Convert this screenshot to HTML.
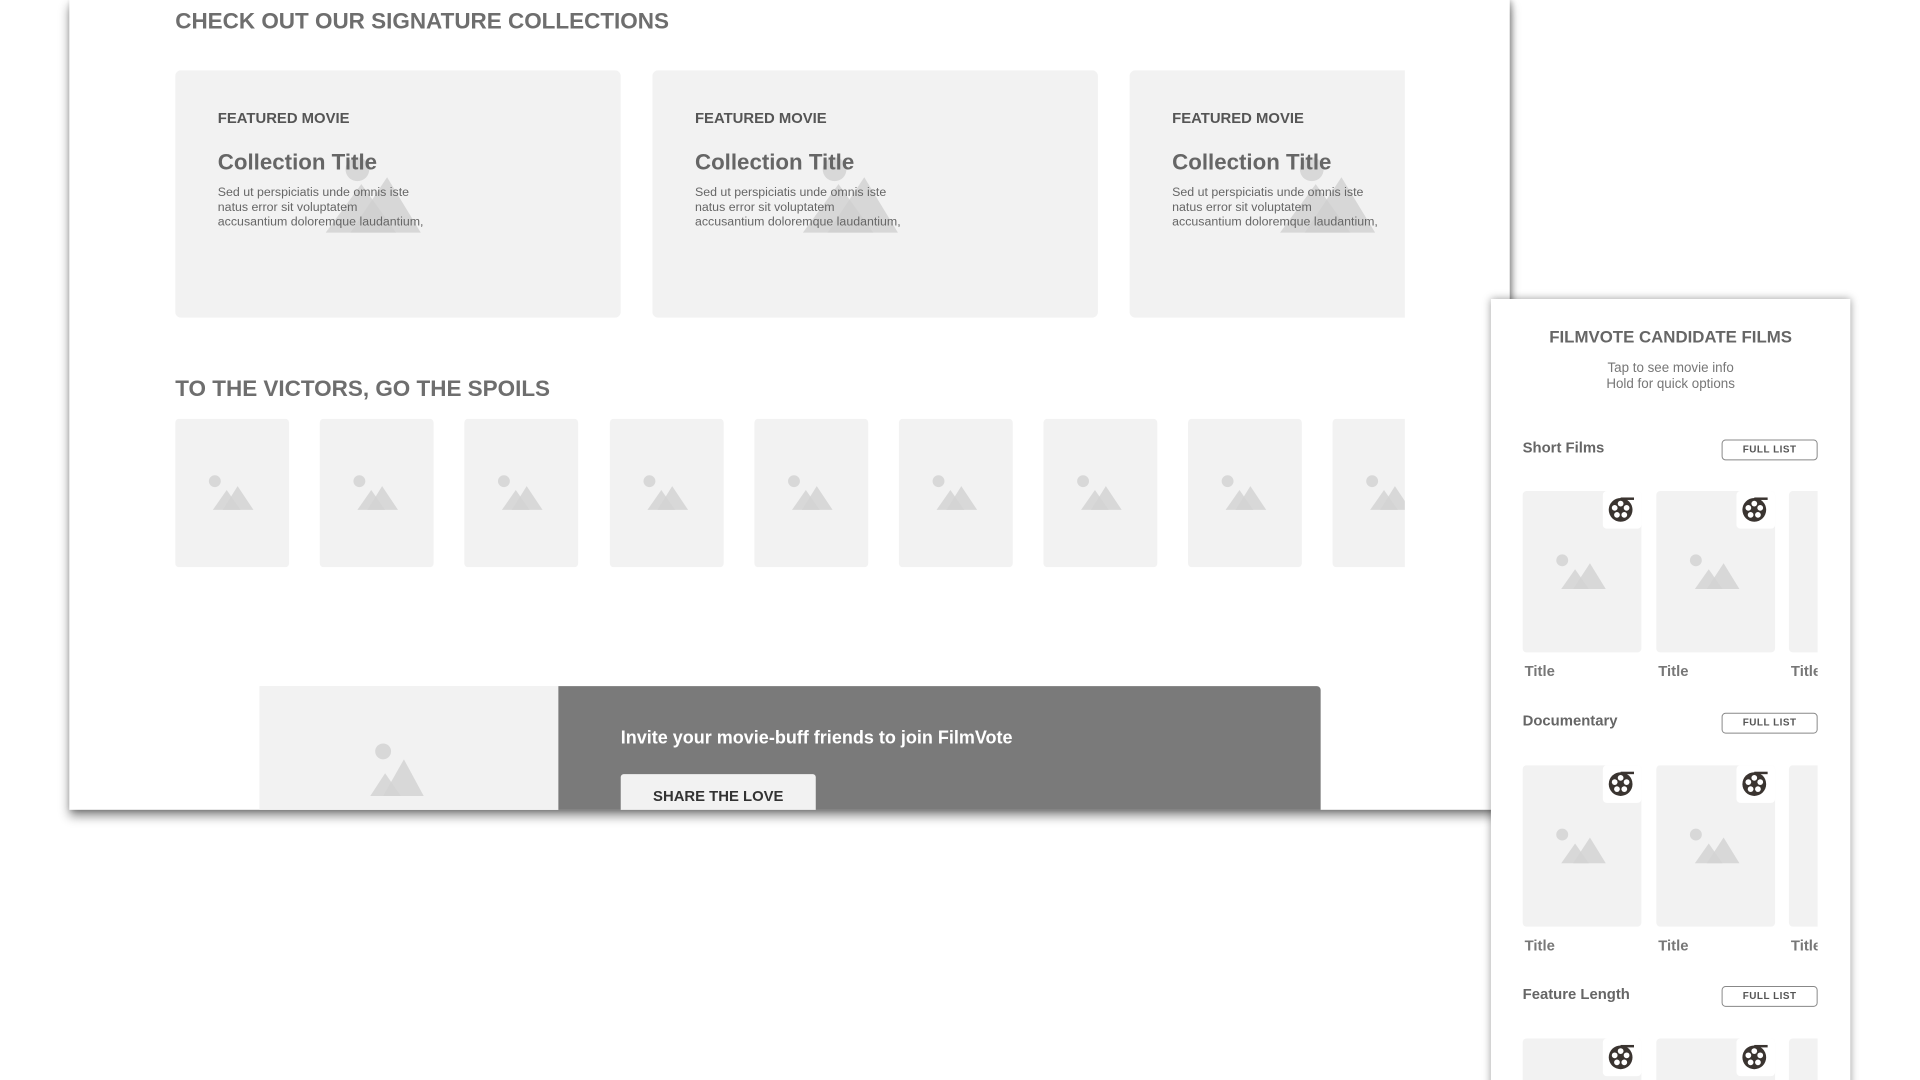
<!DOCTYPE html>
<html style="overflow:hidden;height:1080px"><head><meta charset="utf-8"><style>
*{margin:0;padding:0;box-sizing:border-box}
body{width:1920px;height:1080px;background:#fff;position:relative;overflow:hidden;font-family:"Liberation Sans",Arial,sans-serif}
#wrap{position:absolute;left:0;top:0;width:1940px;height:1091px;transform:scale(0.99);transform-origin:0 0}
.abs{position:absolute}
#main{left:70px;top:0;width:1455px;height:818px;background:#fff;box-shadow:0 6px 10px rgba(0,0,0,.45),2px 0 6px rgba(0,0,0,.3);overflow:hidden}
.h{color:#6e6e6e;font-weight:bold;font-size:22.7px;white-space:nowrap}
.card{background:#f2f2f2;border-radius:6px;overflow:hidden}
.fm{font-size:15px;font-weight:bold;color:#555}
.ct{font-size:22.5px;font-weight:bold;color:#666}
.bt{font-size:12.5px;color:#666;line-height:15px}
#side{left:1506px;top:302px;width:363px;height:800px;background:#fff;box-shadow:0 0 8px rgba(0,0,0,.4);overflow:hidden}
.sh{font-size:15px;font-weight:bold;color:#666}
.fl{width:97px;height:21px;border:1px solid #888;border-radius:4px;font-size:10px;font-weight:bold;color:#555;text-align:center;line-height:19px;letter-spacing:.5px}
.tt{font-size:15px;font-weight:bold;color:#777}
</style></head><body><div id="wrap">
<div id="main" class="abs">
 <div class="abs h" style="left:107px;top:8px">CHECK OUT OUR SIGNATURE COLLECTIONS</div>
 <div class="abs" style="left:107px;top:71px;width:1242px;height:250px;overflow:hidden">
  <div class="abs card" style="left:0;top:0;width:450px;height:250px"></div>
  <div class="abs card" style="left:482px;top:0;width:450px;height:250px"></div>
  <div class="abs card" style="left:964px;top:0;width:450px;height:250px"></div>
  <svg class="abs" style="left:0;top:0" width="1242" height="250">
   <g id="m"><circle cx="184" cy="100" r="12" fill="#d8d8d8"/><polygon points="152,164 188,115 223,164" fill="#d0d0d0" opacity=".8"/><polygon points="177,164 214,108 248,164" fill="#cfcfcf" opacity=".8"/></g>
   <use href="#m" x="482"/><use href="#m" x="964"/>
  </svg>
  <div class="abs" style="left:43px;top:40px"><div class="fm">FEATURED MOVIE</div><div class="ct" style="margin-top:23px">Collection Title</div><div class="bt" style="margin-top:10px">Sed ut perspiciatis unde omnis iste<br>natus error sit voluptatem<br>accusantium doloremque laudantium,</div></div>
  <div class="abs" style="left:525px;top:40px"><div class="fm">FEATURED MOVIE</div><div class="ct" style="margin-top:23px">Collection Title</div><div class="bt" style="margin-top:10px">Sed ut perspiciatis unde omnis iste<br>natus error sit voluptatem<br>accusantium doloremque laudantium,</div></div>
  <div class="abs" style="left:1007px;top:40px"><div class="fm">FEATURED MOVIE</div><div class="ct" style="margin-top:23px">Collection Title</div><div class="bt" style="margin-top:10px">Sed ut perspiciatis unde omnis iste<br>natus error sit voluptatem<br>accusantium doloremque laudantium,</div></div>
 </div>
 <div class="abs h" style="left:107px;top:379px">TO THE VICTORS, GO THE SPOILS</div>
 <svg class="abs" style="left:107px;top:423px" width="1242" height="150">
  <defs><g id="t"><rect width="115" height="150" rx="4" fill="#f2f2f2"/><circle cx="40" cy="63" r="6" fill="#d8d8d8"/><polygon points="38,92 52,72 66,92" fill="#d3d3d3" opacity=".85"/><polygon points="48,92 63,68 79,92" fill="#d3d3d3" opacity=".85"/></g></defs>
  <use href="#t" x="0"/><use href="#t" x="146"/><use href="#t" x="292"/><use href="#t" x="439"/><use href="#t" x="585"/><use href="#t" x="731"/><use href="#t" x="877"/><use href="#t" x="1023"/><use href="#t" x="1169"/>
 </svg>
 <div class="abs" style="left:192px;top:693px;width:302px;height:140px;background:#f2f2f2">
  <svg width="302" height="140"><circle cx="125" cy="66" r="8" fill="#d8d8d8"/><polygon points="112,111 127,88 143,111" fill="#d3d3d3" opacity=".85"/><polygon points="125,111 146,74 166,111" fill="#d3d3d3" opacity=".85"/></svg>
 </div>
 <div class="abs" style="left:494px;top:693px;width:770px;height:140px;background:#7a7a7a;border-radius:0 4px 0 0">
  <div class="abs" style="left:63px;top:42px;color:#fff;font-weight:bold;font-size:18.2px">Invite your movie-buff friends to join FilmVote</div>
  <div class="abs" style="left:63px;top:89px;width:197px;height:60px;background:#f2f2f2;border-radius:3px;text-align:center;padding-top:14px;font-weight:bold;font-size:15px;color:#333">SHARE THE LOVE</div>
 </div>
</div>
<div id="side" class="abs">
 <div class="abs" style="left:0;top:29px;width:363px;text-align:center;font-size:17px;font-weight:bold;color:#666">FILMVOTE CANDIDATE FILMS</div>
 <div class="abs" style="left:0;top:62px;width:363px;text-align:center;font-size:13.5px;color:#777;line-height:16px">Tap to see movie info<br>Hold for quick options</div>
 <svg width="0" height="0" style="position:absolute"><defs>
  <g id="reel"><circle cx="0" cy="0" r="12" fill="#3a3430"/><circle cx="0" cy="-6.3" r="2.9" fill="#fff"/><circle cx="6" cy="-2" r="2.9" fill="#fff"/><circle cx="3.7" cy="5.1" r="2.9" fill="#fff"/><circle cx="-3.7" cy="5.1" r="2.9" fill="#fff"/><circle cx="-6" cy="-2" r="2.9" fill="#fff"/><rect x="0" y="-12.5" width="13.5" height="2.5" fill="#3a3430"/></g>
  <g id="sc"><rect width="120" height="163" rx="4" fill="#f2f2f2"/><circle cx="40" cy="70" r="6" fill="#d8d8d8"/><polygon points="39,99 53,79 67,99" fill="#d3d3d3" opacity=".85"/><polygon points="51,99 68,73 84,99" fill="#d3d3d3" opacity=".85"/><rect x="81" y="0" width="39" height="38" rx="4" fill="#fff"/><use href="#reel" x="99" y="19"/></g>
 </defs></svg>
 <div class="abs" style="left:32px;top:142px;width:298px">
  <div class="abs sh" style="left:0;top:0">Short Films</div>
  <div class="abs fl" style="left:201px;top:0">FULL LIST</div>
  <svg class="abs" style="left:0;top:52px" width="298" height="165"><use href="#sc" x="0"/><use href="#sc" x="135"/><rect x="269" width="40" height="163" rx="4" fill="#f2f2f2"/></svg>
  <div class="abs tt" style="left:2px;top:226px">Title</div><div class="abs tt" style="left:137px;top:226px">Title</div><div class="abs tt" style="left:271px;top:226px;width:27px;overflow:hidden">Title</div>
 </div>
 <div class="abs" style="left:32px;top:418px;width:298px">
  <div class="abs sh" style="left:0;top:0">Documentary</div>
  <div class="abs fl" style="left:201px;top:0">FULL LIST</div>
  <svg class="abs" style="left:0;top:53px" width="298" height="165"><use href="#sc" x="0"/><use href="#sc" x="135"/><rect x="269" width="40" height="163" rx="4" fill="#f2f2f2"/></svg>
  <div class="abs tt" style="left:2px;top:227px">Title</div><div class="abs tt" style="left:137px;top:227px">Title</div><div class="abs tt" style="left:271px;top:227px;width:27px;overflow:hidden">Title</div>
 </div>
 <div class="abs" style="left:32px;top:694px;width:298px">
  <div class="abs sh" style="left:0;top:0">Feature Length</div>
  <div class="abs fl" style="left:201px;top:0">FULL LIST</div>
  <svg class="abs" style="left:0;top:53px" width="298" height="165"><use href="#sc" x="0"/><use href="#sc" x="135"/><rect x="269" width="40" height="163" rx="4" fill="#f2f2f2"/></svg>
 </div>
</div>
</div></body></html>
